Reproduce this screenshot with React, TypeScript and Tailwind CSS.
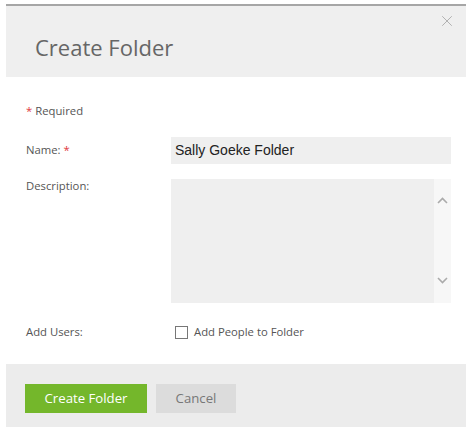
import { X } from "lucide-react";

const labelCls = "w-[145px] shrink-0 text-[11.3px] text-[#555]";

// Thin scroll arrow used inside the description box
function Arrow({ up }: { up?: boolean }) {
  return (
    <svg width="11" height="7" viewBox="0 0 11 7" fill="none" stroke="currentColor" strokeWidth="1.6">
      <polyline points={up ? "1,6 5.5,1.5 10,6" : "1,1 5.5,5.5 10,1"} />
    </svg>
  );
}

export default function App() {
  return (
    <div className="w-[466px] h-[427px] bg-white pt-[4px] pl-[6px] font-['Open_Sans',sans-serif] overflow-hidden">
      <div className="border-t-2 border-[#a6a6a6] flex flex-col h-[423px]">
        {/* Header */}
        <div className="relative h-[71px] bg-[#efefef] flex items-center pl-[29px] pt-[10px]">
          <h1 className="text-[22px] text-[#666] leading-none">Create Folder</h1>
          <button type="button" className="absolute right-[10px] top-[6px] text-[#b0b0b0]">
            <X size={18} strokeWidth={1.3} />
          </button>
        </div>

        {/* Body */}
        <div className="flex-1 pl-[20px] pr-[15px]">
          <p className="mt-[25px] text-[11.3px] leading-[17px] text-[#555]">
            <span className="text-[#e0393e]">*</span> Required
          </p>

          <div className="flex items-center mt-[18px]">
            <span className={labelCls}>
              Name: <span className="text-[#e0393e]">*</span>
            </span>
            <div className="flex-1 h-[27px] bg-[#efefef] flex items-center pl-[4px] font-['Liberation_Sans',sans-serif] text-[14px] text-[#222]">
              Sally Goeke Folder
            </div>
          </div>

          <div className="flex items-start mt-[15px]">
            <span className={`${labelCls} -mt-[1px]`}>Description:</span>
            <div className="flex-1 h-[124px] flex bg-[#efefef]">
              <div className="flex-1" />
              <div className="w-[17px] bg-[#f7f7f7] flex flex-col items-center justify-between pt-[18px] pb-[19px] text-[#ababab]">
                <Arrow up />
                <Arrow />
              </div>
            </div>
          </div>

          <div className="flex items-center mt-[19px] h-[20px]">
            <span className={labelCls}>Add Users:</span>
            <label className="flex items-center gap-[6px] pl-[4px] text-[11.3px] text-[#555]">
              <span className="w-[13px] h-[13px] border border-[#777] bg-white" />
              Add People to Folder
            </label>
          </div>
        </div>

        {/* Footer */}
        <div className="h-[63px] bg-[#ececec] flex items-start gap-[9px] pl-[19px] pt-[20px]">
          <button type="button" className="w-[122px] h-[29px] bg-[#74b72b] text-white text-[13.2px]">
            Create Folder
          </button>
          <button type="button" className="w-[80px] h-[29px] bg-[#dcdcdc] text-[#777] text-[13.2px]">
            Cancel
          </button>
        </div>
      </div>
    </div>
  );
}
